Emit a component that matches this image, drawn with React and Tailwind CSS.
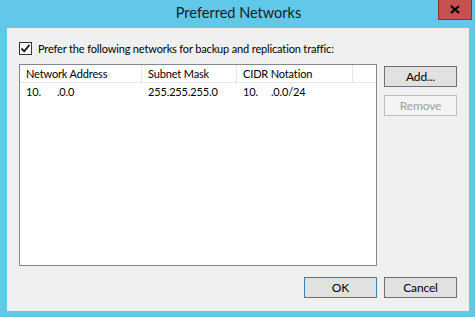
function Button({ children, variant = "normal" }) {
  const styles = {
    normal: "border-[#707070] bg-[#e1e1e1] text-[#000]",
    default: "border-[#3c7fb1] bg-[#e1e1e1] text-[#000]",
    disabled: "border-[#bfbfbf] bg-[#f4f4f4] text-[#a0a0a0]",
  };
  return (
    <div
      className={`w-[73px] h-[21px] border flex items-center justify-center text-[12px] leading-none ${styles[variant]}`}
    >
      {children}
    </div>
  );
}

function Checkbox() {
  return (
    <div className="w-[13px] h-[13px] border border-[#333333] bg-white flex items-center justify-center">
      <svg width="11" height="11" viewBox="0 0 11 11">
        <path d="M1.5 5.5 L4.2 8.3 L9.5 1.8" fill="none" stroke="#222" strokeWidth="1.9" />
      </svg>
    </div>
  );
}

const columns = [
  { title: "Network Address", width: "w-[122px]" },
  { title: "Subnet Mask", width: "w-[95px]" },
  { title: "CIDR Notation", width: "w-[116px]" },
];

export default function App() {
  return (
    <div className="w-[475px] h-[317px] bg-[#62c8ea] flex flex-col font-['Lato','Noto_Sans',sans-serif] text-[#000]">
      <div className="relative h-[28px] flex items-center justify-center">
        <span className="text-[14.5px] text-[#1a1a1a] -mt-[2px] pl-[2px]">Preferred Networks</span>
        <div className="absolute right-[3px] top-0 w-[34px] h-[20px] bg-[#c75050] border border-[#8a2d2d] border-t-0 flex items-center justify-center">
          <svg width="10" height="9" viewBox="0 0 10 9">
            <path d="M1 1 L9 8 M9 1 L1 8" stroke="#000" strokeWidth="2.2" />
          </svg>
        </div>
      </div>
      <div className="mx-[7px] w-[462px] h-[283px] bg-[#f0f0f0] pl-[12px] pr-[12px] pt-[14px] flex flex-col text-[11px] tracking-[-0.15px]">
        <div className="flex items-center gap-[6px] h-[13px]">
          <Checkbox />
          <span className="leading-none">
            Prefer the following networks for backup and replication traffic:
          </span>
        </div>
        <div className="flex mt-[9px] gap-[7px]">
          <div className="w-[358px] h-[202px] border border-[#828790] bg-white flex flex-col">
            <div className="flex h-[18px] border-b border-[#e5e5e5]">
              {columns.map((c) => (
                <div
                  key={c.title}
                  className={`${c.width} border-r border-[#e5e5e5] pl-[6px] flex items-center leading-none`}
                >
                  {c.title}
                </div>
              ))}
            </div>
            <div className="flex h-[16px] items-center leading-none">
              <div className="w-[122px] pl-[6px]">
                10.<span className="inline-block w-[16px]" />.0.0
              </div>
              <div className="w-[95px] pl-[6px]">255.255.255.0</div>
              <div className="w-[116px] pl-[6px]">
                10.<span className="inline-block w-[13px]" />.0.0/24
              </div>
            </div>
          </div>
          <div className="flex flex-col gap-[8px] pt-[2px]">
            <Button>Add...</Button>
            <Button variant="disabled">Remove</Button>
          </div>
        </div>
        <div className="flex justify-end gap-[7px] mt-[11px]">
          <Button variant="default">OK</Button>
          <Button>Cancel</Button>
        </div>
      </div>
    </div>
  );
}
